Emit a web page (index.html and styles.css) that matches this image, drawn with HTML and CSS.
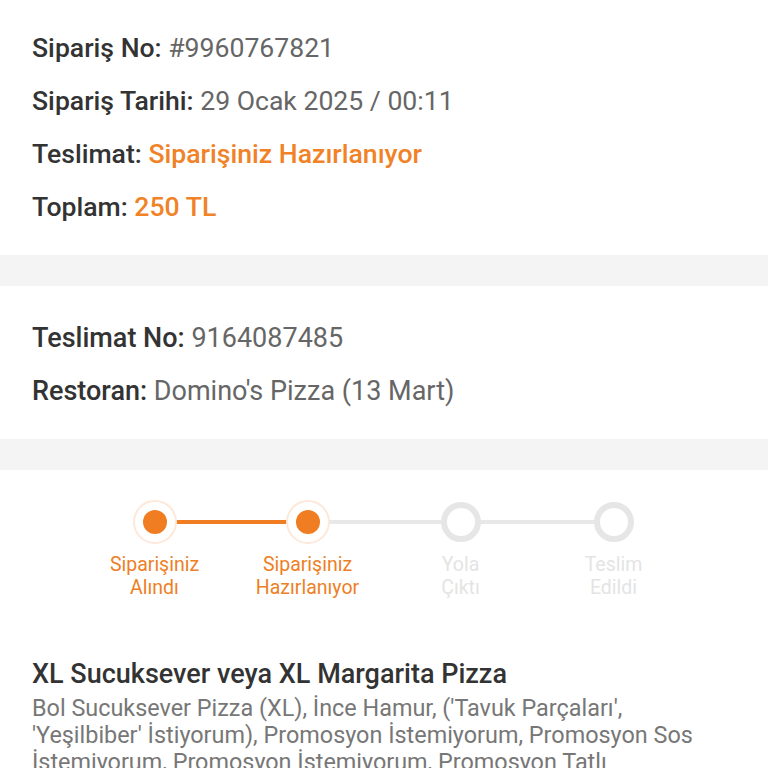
FILE: index.html
```
<!DOCTYPE html>
<html lang="tr">
<head>
<meta charset="utf-8">
<link rel="stylesheet" href="styles.css">
</head>
<body>
<section class="card card-top">
  <p class="row"><span class="lbl">Sipariş No:</span> <span class="val">#9960767821</span></p>
  <p class="row"><span class="lbl">Sipariş Tarihi:</span> <span class="val">29 Ocak 2025 / 00:11</span></p>
  <p class="row"><span class="lbl">Teslimat:</span> <span class="val orange">Siparişiniz Hazırlanıyor</span></p>
  <p class="row"><span class="lbl">Toplam:</span> <span class="val orange">250 TL</span></p>
</section>
<div class="gap"></div>
<section class="card card-mid">
  <p class="row"><span class="lbl">Teslimat No:</span> <span class="val">9164087485</span></p>
  <p class="row"><span class="lbl">Restoran:</span> <span class="val">Domino's Pizza (13 Mart)</span></p>
</section>
<div class="gap"></div>
<section class="card card-bottom">
  <div class="stepper">
    <div class="step done">
      <div class="dot-wrap"><span class="line line-right on"></span><span class="dot"></span></div>
      <div class="step-label">Siparişiniz<br>Alındı</div>
    </div>
    <div class="step done">
      <div class="dot-wrap"><span class="line line-left on"></span><span class="line line-right"></span><span class="dot"></span></div>
      <div class="step-label">Siparişiniz<br>Hazırlanıyor</div>
    </div>
    <div class="step">
      <div class="dot-wrap"><span class="line line-left"></span><span class="line line-right"></span><span class="dot"></span></div>
      <div class="step-label">Yola<br>Çıktı</div>
    </div>
    <div class="step">
      <div class="dot-wrap"><span class="line line-left"></span><span class="dot"></span></div>
      <div class="step-label">Teslim<br>Edildi</div>
    </div>
  </div>
  <h2 class="item-title">XL Sucuksever veya XL Margarita Pizza</h2>
  <p class="item-desc">Bol Sucuksever Pizza (XL), İnce Hamur, ('Tavuk Parçaları', 'Yeşilbiber' İstiyorum), Promosyon İstemiyorum, Promosyon Sos İstemiyorum, Promosyon İstemiyorum, Promosyon Tatlı İstemiyorum</p>
</section>
</body>
</html>
```
FILE: styles.css
```
html, body {
  margin: 0;
  padding: 0;
  background: #ffffff;
  font-family: Roboto, "Noto Sans", sans-serif;
  overflow: hidden;
}
.card {
  background: #ffffff;
  padding: 0 32px;
}
.card-top {
  padding-top: 31px;
  padding-bottom: 12px;
}
.card-mid {
  padding-top: 35px;
  padding-bottom: 12px;
}
.card-mid .row {
  font-size: 27px;
}
.gap {
  height: 31px;
  background: #f4f4f4;
}
.row {
  margin: 0;
  height: 53px;
  line-height: 34px;
  font-size: 26.6px;
  color: #333333;
  white-space: nowrap;
}
.lbl {
  font-weight: 500;
  color: #333333;
}
.val {
  font-weight: 400;
  color: #666666;
}
.val.orange {
  color: #f08227;
  font-weight: 500;
}
.card-bottom {
  padding-top: 30px;
}
.stepper {
  display: grid;
  grid-template-columns: repeat(4, 153px);
  justify-content: center;
  margin-left: -32px;
  margin-right: -32px;
}
.step {
  display: flex;
  flex-direction: column;
  align-items: center;
}
.dot-wrap {
  position: relative;
  width: 100%;
  height: 44px;
  display: flex;
  align-items: center;
  justify-content: center;
}
.line {
  position: absolute;
  top: 20px;
  height: 4px;
  background: #e8e8e8;
}
.line.on {
  background: #f07d22;
}
.line-left {
  left: 0;
  right: 50%;
}
.line-right {
  left: 50%;
  right: 0;
}
.dot {
  position: relative;
  box-sizing: border-box;
  width: 40px;
  height: 40px;
  border-radius: 50%;
  background: #ffffff;
  border: 6px solid #e6e6e6;
}
.step.done .dot {
  width: 44px;
  height: 44px;
  border: 2px solid #fde8da;
  background: #ffffff;
}
.step.done .dot::after {
  content: "";
  position: absolute;
  left: 8px;
  top: 8px;
  width: 24px;
  height: 24px;
  border-radius: 50%;
  background: #f07d22;
}
.step-label {
  margin-top: 9px;
  font-size: 19.5px;
  line-height: 23px;
  text-align: center;
  color: #e4e4e4;
}
.step.done .step-label {
  color: #ee7f26;
}
.item-title {
  margin: 57px 0 0;
  font-size: 27px;
  font-weight: 500;
  line-height: 36px;
  color: #333333;
}
.item-desc {
  margin: 3px 0 0;
  font-size: 23.4px;
  line-height: 27px;
  color: #777777;
}
```
